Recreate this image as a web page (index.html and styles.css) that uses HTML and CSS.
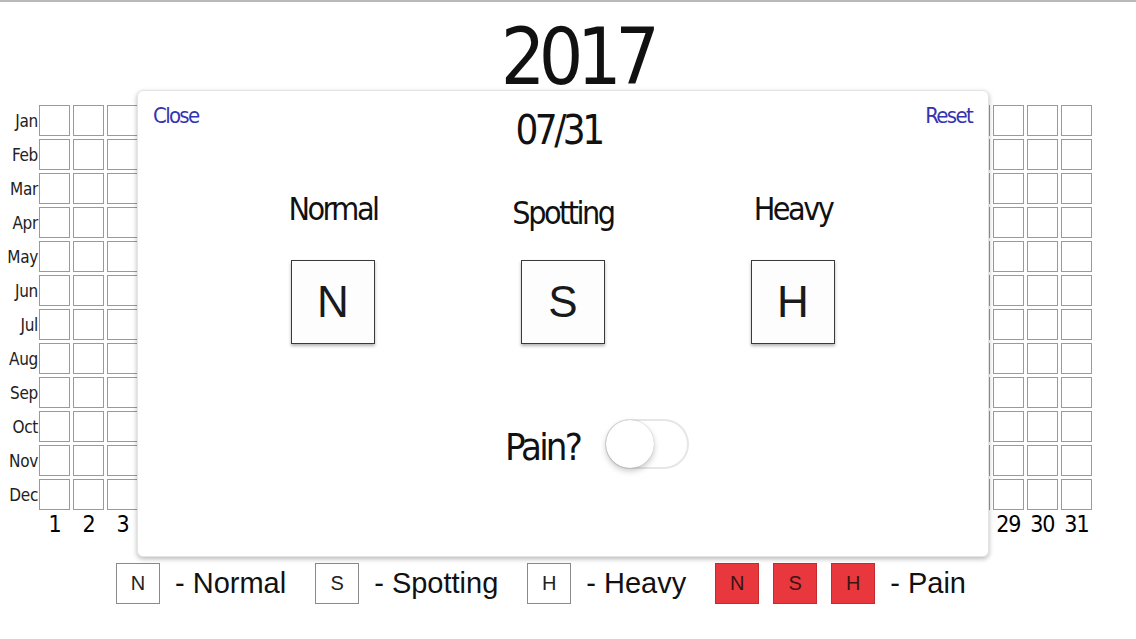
FILE: index.html
```html
<!DOCTYPE html>
<html>
<head>
<meta charset="utf-8">
<link rel="stylesheet" href="styles.css">
</head>
<body>
<div class="page">
  <h1 class="year">2017</h1>
  <div class="calendar">
    <div class="month">Jan</div><i></i><i></i><i></i><i></i><i></i><i></i><i></i><i></i><i></i><i></i><i></i><i></i><i></i><i></i><i></i><i></i><i></i><i></i><i></i><i></i><i></i><i></i><i></i><i></i><i></i><i></i><i></i><i></i><i></i><i></i><i></i>
    <div class="month">Feb</div><i></i><i></i><i></i><i></i><i></i><i></i><i></i><i></i><i></i><i></i><i></i><i></i><i></i><i></i><i></i><i></i><i></i><i></i><i></i><i></i><i></i><i></i><i></i><i></i><i></i><i></i><i></i><i></i><i></i><i></i><i></i>
    <div class="month">Mar</div><i></i><i></i><i></i><i></i><i></i><i></i><i></i><i></i><i></i><i></i><i></i><i></i><i></i><i></i><i></i><i></i><i></i><i></i><i></i><i></i><i></i><i></i><i></i><i></i><i></i><i></i><i></i><i></i><i></i><i></i><i></i>
    <div class="month">Apr</div><i></i><i></i><i></i><i></i><i></i><i></i><i></i><i></i><i></i><i></i><i></i><i></i><i></i><i></i><i></i><i></i><i></i><i></i><i></i><i></i><i></i><i></i><i></i><i></i><i></i><i></i><i></i><i></i><i></i><i></i><i></i>
    <div class="month">May</div><i></i><i></i><i></i><i></i><i></i><i></i><i></i><i></i><i></i><i></i><i></i><i></i><i></i><i></i><i></i><i></i><i></i><i></i><i></i><i></i><i></i><i></i><i></i><i></i><i></i><i></i><i></i><i></i><i></i><i></i><i></i>
    <div class="month">Jun</div><i></i><i></i><i></i><i></i><i></i><i></i><i></i><i></i><i></i><i></i><i></i><i></i><i></i><i></i><i></i><i></i><i></i><i></i><i></i><i></i><i></i><i></i><i></i><i></i><i></i><i></i><i></i><i></i><i></i><i></i><i></i>
    <div class="month">Jul</div><i></i><i></i><i></i><i></i><i></i><i></i><i></i><i></i><i></i><i></i><i></i><i></i><i></i><i></i><i></i><i></i><i></i><i></i><i></i><i></i><i></i><i></i><i></i><i></i><i></i><i></i><i></i><i></i><i></i><i></i><i></i>
    <div class="month">Aug</div><i></i><i></i><i></i><i></i><i></i><i></i><i></i><i></i><i></i><i></i><i></i><i></i><i></i><i></i><i></i><i></i><i></i><i></i><i></i><i></i><i></i><i></i><i></i><i></i><i></i><i></i><i></i><i></i><i></i><i></i><i></i>
    <div class="month">Sep</div><i></i><i></i><i></i><i></i><i></i><i></i><i></i><i></i><i></i><i></i><i></i><i></i><i></i><i></i><i></i><i></i><i></i><i></i><i></i><i></i><i></i><i></i><i></i><i></i><i></i><i></i><i></i><i></i><i></i><i></i><i></i>
    <div class="month">Oct</div><i></i><i></i><i></i><i></i><i></i><i></i><i></i><i></i><i></i><i></i><i></i><i></i><i></i><i></i><i></i><i></i><i></i><i></i><i></i><i></i><i></i><i></i><i></i><i></i><i></i><i></i><i></i><i></i><i></i><i></i><i></i>
    <div class="month">Nov</div><i></i><i></i><i></i><i></i><i></i><i></i><i></i><i></i><i></i><i></i><i></i><i></i><i></i><i></i><i></i><i></i><i></i><i></i><i></i><i></i><i></i><i></i><i></i><i></i><i></i><i></i><i></i><i></i><i></i><i></i><i></i>
    <div class="month">Dec</div><i></i><i></i><i></i><i></i><i></i><i></i><i></i><i></i><i></i><i></i><i></i><i></i><i></i><i></i><i></i><i></i><i></i><i></i><i></i><i></i><i></i><i></i><i></i><i></i><i></i><i></i><i></i><i></i><i></i><i></i><i></i>
    <div class="month"></div><b>1</b><b>2</b><b>3</b><b>4</b><b>5</b><b>6</b><b>7</b><b>8</b><b>9</b><b>10</b><b>11</b><b>12</b><b>13</b><b>14</b><b>15</b><b>16</b><b>17</b><b>18</b><b>19</b><b>20</b><b>21</b><b>22</b><b>23</b><b>24</b><b>25</b><b>26</b><b>27</b><b>28</b><b>29</b><b>30</b><b>31</b>
  </div>
  <div class="legend">
    <span class="key">N</span><span class="key-text">- Normal</span>
    <span class="key">S</span><span class="key-text">- Spotting</span>
    <span class="key">H</span><span class="key-text">- Heavy</span>
    <span class="key red">N</span><span class="key red">S</span><span class="key red">H</span><span class="key-text">- Pain</span>
  </div>

  <div class="modal">
    <div class="modal-head">
      <span class="link">Close</span>
      <span class="date">07/31</span>
      <span class="link right">Reset</span>
    </div>
    <div class="choices">
      <div class="choice"><div class="choice-label">Normal</div><div class="choice-box">N</div></div>
      <div class="choice"><div class="choice-label low">Spotting</div><div class="choice-box">S</div></div>
      <div class="choice"><div class="choice-label">Heavy</div><div class="choice-box">H</div></div>
    </div>
    <div class="pain">
      <span class="pain-label">Pain?</span>
      <span class="switch"><span class="knob"></span></span>
    </div>
  </div>
</div>
</body>
</html>
```

FILE: styles.css
```css
html, body {
  margin: 0;
  padding: 0;
  background: #fff;
}
body {
  width: 1136px;
  height: 639px;
  overflow: hidden;
  border-top: 2px solid #b9b9b9;
  box-sizing: border-box;
  font-family: "DejaVu Sans Condensed", "DejaVu Sans", sans-serif;
  font-stretch: condensed;
  color: #111;
}
.page {
  position: relative;
  height: 637px;
}
.year {
  margin: 0;
  padding-top: 15px;
  font-size: 78px;
  line-height: 80px;
  letter-spacing: -6.5px;
  font-weight: normal;
  text-align: center;
  padding-left: 18px;
  box-sizing: border-box;
  height: 103px;
}
.calendar {
  display: grid;
  grid-template-columns: 36px repeat(31, 31px);
  grid-auto-rows: 31px;
  column-gap: 3.07px;
  row-gap: 3px;
}
.calendar i {
  display: block;
  border: 1px solid #9a9a9a;
  box-sizing: border-box;
  background: #fff;
}
.month {
  font-size: 17px;
  line-height: 31px;
  text-align: right;
  margin-right: -2px;
  letter-spacing: -0.3px;
  color: #222;
  padding-top: 1px;
}
.calendar b {
  font-weight: normal;
  font-size: 23px;
  line-height: 26px;
  letter-spacing: -1px;
  text-align: center;
  color: #000;
  margin-top: -2px;
}
.legend {
  display: flex;
  align-items: center;
  padding-left: 116px;
  margin-top: 19px;
  font-family: "Liberation Sans", Arial, sans-serif;
  font-stretch: normal;
}
.key {
  width: 44px;
  height: 41px;
  box-sizing: border-box;
  border: 1px solid #8a8a8a;
  display: flex;
  align-items: center;
  justify-content: center;
  font-size: 20px;
  color: #222;
  margin-right: 14px;
}
.key.red {
  background: #e8383d;
  border-color: #c52a2e;
  color: #3c1414;
}
.key-text {
  font-size: 29px;
  color: #111;
  margin-left: 1px;
  margin-right: 29px;
}
.modal {
  position: absolute;
  left: 137px;
  top: 88px;
  width: 852px;
  height: 467px;
  background: #fff;
  border-radius: 6px;
  border: 1px solid #e4e4e4;
  box-sizing: border-box;
  box-shadow: 0 2px 5px rgba(0, 0, 0, 0.28);
  display: flex;
  flex-direction: column;
}
.modal-head {
  display: grid;
  grid-template-columns: 1fr auto 1fr;
  padding: 12px 16px 0 15px;
}
.link {
  font-size: 22px;
  line-height: 26px;
  letter-spacing: -1.7px;
  color: #3434b0;
}
.link.right {
  text-align: right;
}
.date {
  font-size: 40px;
  line-height: 50px;
  letter-spacing: -3.5px;
  padding-right: 8px;
  margin-top: 2px;
}
.choices {
  display: flex;
  justify-content: center;
  margin-top: 34px;
}
.choice {
  width: 230px;
  display: flex;
  flex-direction: column;
  align-items: center;
}
.choice-label {
  font-size: 32px;
  line-height: 40px;
  letter-spacing: -2.5px;
  height: 71px;
}
.choice-label.low {
  padding-top: 4px;
  height: 67px;
}
.choice-box {
  width: 84px;
  height: 84px;
  box-sizing: border-box;
  border: 1.5px solid #3a3a3a;
  background: #fdfdfd;
  box-shadow: 0 2px 3px rgba(0, 0, 0, 0.3);
  display: flex;
  align-items: center;
  justify-content: center;
  font-family: "Liberation Sans", Arial, sans-serif;
  font-stretch: normal;
  font-size: 44px;
  color: #1a1a1a;
}
.pain {
  display: flex;
  align-items: center;
  justify-content: center;
  gap: 25px;
  margin-top: 72px;
  padding-left: 68px;
}
.pain-label {
  font-size: 38px;
  line-height: 50px;
  letter-spacing: -2.8px;
  padding-top: 6px;
}
.switch {
  position: relative;
  width: 84px;
  height: 50px;
  box-sizing: border-box;
  border: 2px solid #e6e6e6;
  border-radius: 25px;
  background: #fff;
}
.knob {
  position: absolute;
  left: -1px;
  top: -1px;
  width: 48px;
  height: 48px;
  border-radius: 50%;
  background: #fff;
  box-shadow: 0 3px 6px rgba(0, 0, 0, 0.22), 0 0 1px rgba(0, 0, 0, 0.3);
}
```
